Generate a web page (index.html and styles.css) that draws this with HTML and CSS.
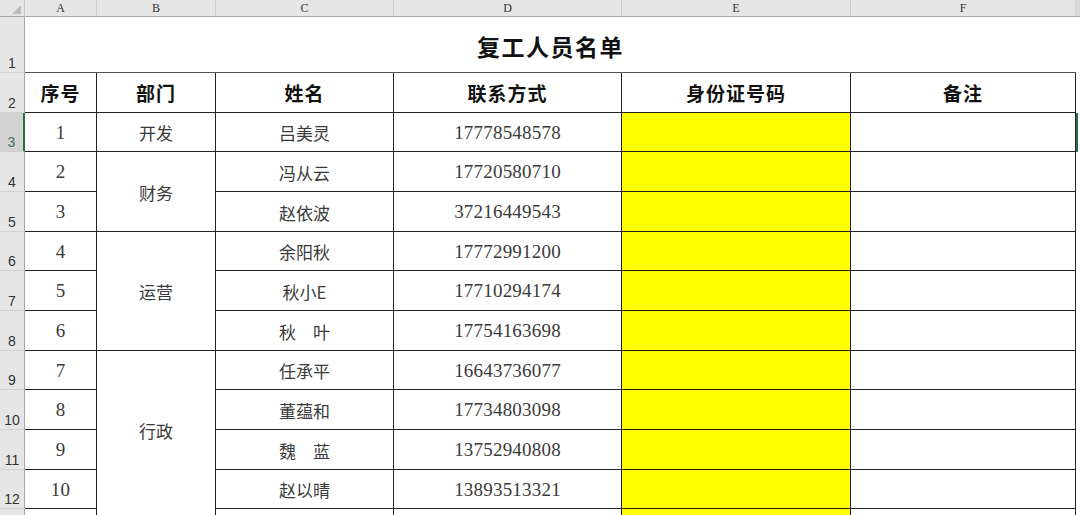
FILE: index.html
```html
<!DOCTYPE html>
<html lang="zh">
<head>
<meta charset="utf-8">
<title>复工人员名单</title>
<link rel="stylesheet" href="styles.css">
</head>
<body>
<div class="sheet">
  <div class="corner"><span class="tri"></span></div>
  <div class="ch">A</div><div class="ch">B</div><div class="ch">C</div><div class="ch">D</div><div class="ch">E</div><div class="ch">F</div><div class="ch gh"></div>

  <div class="rh">1</div>
  <div class="title">复工人员名单</div>
  <div class="g"></div>

  <div class="rh">2</div>
  <div class="c h">序号</div><div class="c h">部门</div><div class="c h">姓名</div><div class="c h">联系方式</div><div class="c h">身份证号码</div><div class="c h">备注</div>
  <div class="g"></div>

  <div class="rh sel">3</div>
  <div class="c n">1</div><div class="c">开发</div><div class="c">吕美灵</div><div class="c n">17778548578</div><div class="c y"></div><div class="c"></div>
  <div class="g act"></div>

  <div class="rh">4</div>
  <div class="c n">2</div><div class="c span2">财务</div><div class="c">冯从云</div><div class="c n">17720580710</div><div class="c y"></div><div class="c"></div>
  <div class="g"></div>

  <div class="rh">5</div>
  <div class="c n">3</div><div class="c">赵依波</div><div class="c n">37216449543</div><div class="c y"></div><div class="c"></div>
  <div class="g"></div>

  <div class="rh">6</div>
  <div class="c n">4</div><div class="c span3">运营</div><div class="c">余阳秋</div><div class="c n">17772991200</div><div class="c y"></div><div class="c"></div>
  <div class="g"></div>

  <div class="rh">7</div>
  <div class="c n">5</div><div class="c">秋小E</div><div class="c n">17710294174</div><div class="c y"></div><div class="c"></div>
  <div class="g"></div>

  <div class="rh">8</div>
  <div class="c n">6</div><div class="c">秋　叶</div><div class="c n">17754163698</div><div class="c y"></div><div class="c"></div>
  <div class="g"></div>

  <div class="rh">9</div>
  <div class="c n">7</div><div class="c span4">行政</div><div class="c">任承平</div><div class="c n">16643736077</div><div class="c y"></div><div class="c"></div>
  <div class="g"></div>

  <div class="rh">10</div>
  <div class="c n">8</div><div class="c">董蕴和</div><div class="c n">17734803098</div><div class="c y"></div><div class="c"></div>
  <div class="g"></div>

  <div class="rh">11</div>
  <div class="c n">9</div><div class="c">魏　蓝</div><div class="c n">13752940808</div><div class="c y"></div><div class="c"></div>
  <div class="g"></div>

  <div class="rh">12</div>
  <div class="c n">10</div><div class="c">赵以晴</div><div class="c n">13893513321</div><div class="c y"></div><div class="c"></div>
  <div class="g"></div>

  <div class="rh"></div>
  <div class="c"></div><div class="c"></div><div class="c"></div><div class="c y"></div><div class="c"></div>
  <div class="g"></div>
</div>
</body>
</html>
```

FILE: styles.css
```css
html, body {
  margin: 0;
  padding: 0;
  background: #ffffff;
}

body {
  font-family: "Liberation Serif", "Noto Sans CJK SC", serif;
  color: #333;
}

.sheet {
  display: grid;
  grid-template-columns: 25px 72px 119px 178px 228px 229px 225px 4px;
  grid-template-rows: 17px 56px 40px 39px 40px 40px 39px 40px 40px 39px 40px 40px 39px 40px;
  width: 1080px;
  height: 515px;
  overflow: hidden;
}

.corner {
  background: #e6e6e6;
  border-right: 1px solid #c6c6c6;
  border-bottom: 1px solid #a8a8a8;
  position: relative;
}

.tri {
  position: absolute;
  right: 3px;
  bottom: 2px;
  width: 0;
  height: 0;
  border-left: 9px solid transparent;
  border-bottom: 9px solid #bdbdbd;
}

.ch {
  background: #e6e6e6;
  border-right: 1px solid #cfcfcf;
  border-bottom: 1px solid #a8a8a8;
  font-family: "Liberation Serif", serif;
  font-size: 12px;
  color: #333;
  display: flex;
  align-items: center;
  justify-content: center;
  padding-top: 1px;
}

.ch.gh {
  background: #d8d8d8;
  border-right: none;
}

.rh {
  background: #e6e6e6;
  border-right: 1px solid #a8a8a8;
  border-bottom: 1px solid #d0d0d0;
  font-family: "Liberation Sans", sans-serif;
  font-size: 14px;
  color: #333;
  display: flex;
  align-items: flex-end;
  justify-content: center;
  padding-bottom: 1px;
}

.rh.sel {
  background: #d2d2d2;
  color: #3f6e55;
  border-right: 2px solid #217346;
}

.title {
  grid-column: span 6;
  display: flex;
  align-items: center;
  justify-content: center;
  border-bottom: 1px solid #555;
  font-family: "Noto Sans CJK SC", sans-serif;
  font-weight: 700;
  font-size: 23px;
  letter-spacing: 1.5px;
  color: #111;
  padding-top: 2px;
}

.c {
  display: flex;
  align-items: center;
  justify-content: center;
  border-right: 1px solid #222;
  border-bottom: 1px solid #222;
  font-family: "Noto Sans CJK SC", sans-serif;
  font-size: 17px;
  color: #3a3a3a;
  white-space: pre;
  padding-top: 1px;
}

.c.n {
  font-family: "Liberation Serif", serif;
  font-size: 19px;
  letter-spacing: 0.2px;
}

.c.h {
  font-weight: 700;
  font-size: 19px;
  letter-spacing: 1px;
  color: #111;
  padding-top: 0;
}

.c.y {
  background: #ffff00;
}

.span2 { grid-row: span 2; }
.span3 { grid-row: span 3; }
.span4 { grid-row: span 5; border-bottom: none; padding-bottom: 40px; }

.g {
  background: #ffffff;
}

.g.act {
  border-left: 2px solid #217346;
}
```
